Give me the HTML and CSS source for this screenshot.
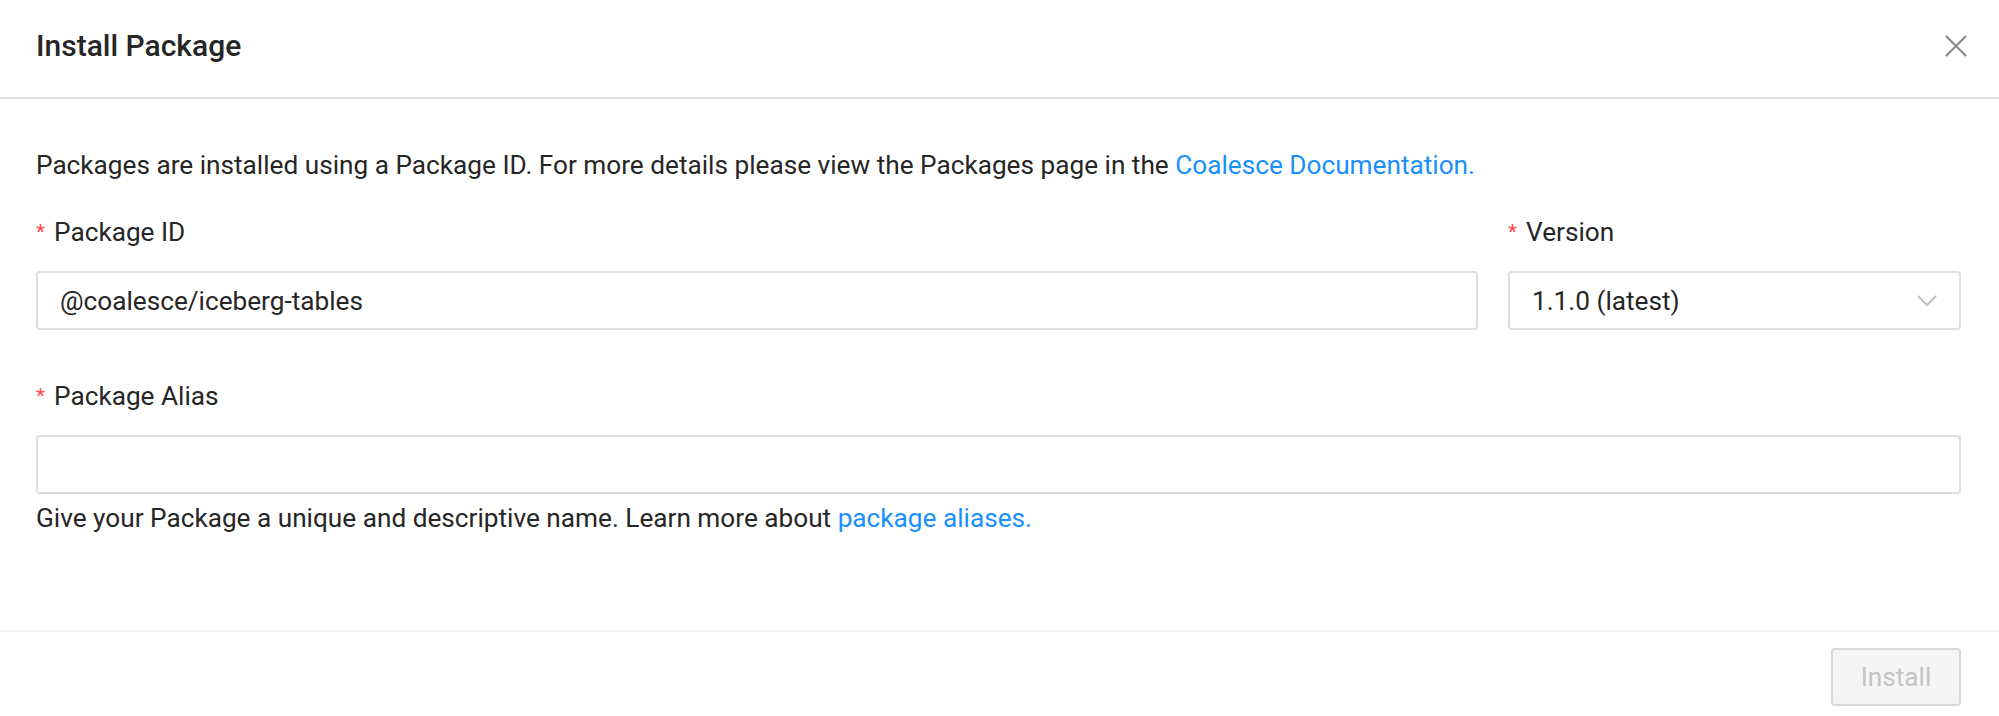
FILE: index.html
```html
<!DOCTYPE html>
<html lang="en">
<head>
<meta charset="utf-8">
<title>Install Package</title>
<link rel="stylesheet" href="styles.css">
</head>
<body>
<div class="modal">
  <header class="modal-header">
    <h1 class="modal-title">Install Package</h1>
    <button class="close" aria-label="Close">
      <svg width="22" height="22" viewBox="0 0 22 22"><path d="M1 1L21 21M21 1L1 21" stroke="#8c8c8c" stroke-width="2.2" fill="none"/></svg>
    </button>
  </header>
  <div class="modal-body">
    <p class="intro">Packages are installed using a Package ID. For more details please view the Packages page in the <a class="link" href="#">Coalesce Documentation.</a></p>
    <div class="row">
      <div class="field">
        <label class="label"><span class="req">*</span>Package ID</label>
        <div class="input">@coalesce/iceberg-tables</div>
      </div>
      <div class="field">
        <label class="label"><span class="req">*</span>Version</label>
        <div class="input select">
          <span>1.1.0 (latest)</span>
          <svg class="chev" width="20" height="12" viewBox="0 0 20 12"><path d="M1 1L10 10L19 1" stroke="#bfbfbf" stroke-width="2" fill="none"/></svg>
        </div>
      </div>
    </div>
    <div class="field alias">
      <label class="label"><span class="req">*</span>Package Alias</label>
      <div class="input empty"></div>
      <p class="help">Give your Package a unique and descriptive name. Learn more about <a class="link" href="#">package aliases.</a></p>
    </div>
  </div>
  <footer class="modal-footer">
    <button class="btn" disabled>Install</button>
  </footer>
</div>
</body>
</html>
```
FILE: styles.css
```css
* { box-sizing: border-box; }
html, body { margin: 0; padding: 0; background: #fff; }
body {
  font-family: Roboto, "Liberation Sans", Arial, sans-serif;
  color: #262626;
  font-size: 26.2px;
  width: 1999px;
  height: 716px;
  overflow: hidden;
}
.modal { display: flex; flex-direction: column; }
.modal-header {
  display: flex;
  align-items: center;
  justify-content: space-between;
  height: 99px;
  padding: 0 32px 6px 36px;
  border-bottom: 2px solid #dedede;
}
.modal-title {
  margin: 0;
  font-size: 30px;
  font-weight: 500;
  line-height: 39px;
  color: #262626;
}
.close {
  border: 0;
  background: none;
  padding: 0;
  width: 22px;
  height: 22px;
  display: flex;
}
.modal-body {
  padding: 47px 38px 93px 36px;
}
.intro, .help {
  margin: 0;
  line-height: 38px;
}
.link { color: #1890ff; text-decoration: none; }
.row {
  display: grid;
  grid-template-columns: 1fr 453px;
  column-gap: 30px;
  margin-top: 29px;
}
.field { display: flex; flex-direction: column; }
.label {
  line-height: 38px;
  margin-bottom: 18px;
  color: #262626;
}
.req {
  color: #ff4d4f;
  font-size: 21px;
  margin-right: 9px;
  position: relative;
  top: -2px;
}
.input {
  height: 59px;
  border: 2px solid #dedede;
  border-radius: 4px;
  padding: 0 22px;
  display: flex;
  align-items: center;
  color: #262626;
}
.select { justify-content: space-between; }
.alias { margin-top: 47px; }
.alias .label { margin-bottom: 18px; }
.alias .input { height: 59px; }
.help { margin-top: 5px; }
.modal-footer {
  border-top: 2px solid #f0f0f0;
  padding: 16px 38px 0 0;
  display: flex;
  justify-content: flex-end;
}
.btn {
  width: 130px;
  height: 58px;
  border: 2px solid #d9d9d9;
  border-radius: 4px;
  background: #f5f5f5;
  color: #c4c4c4;
  font-family: inherit;
  font-size: 26.2px;
}
```
